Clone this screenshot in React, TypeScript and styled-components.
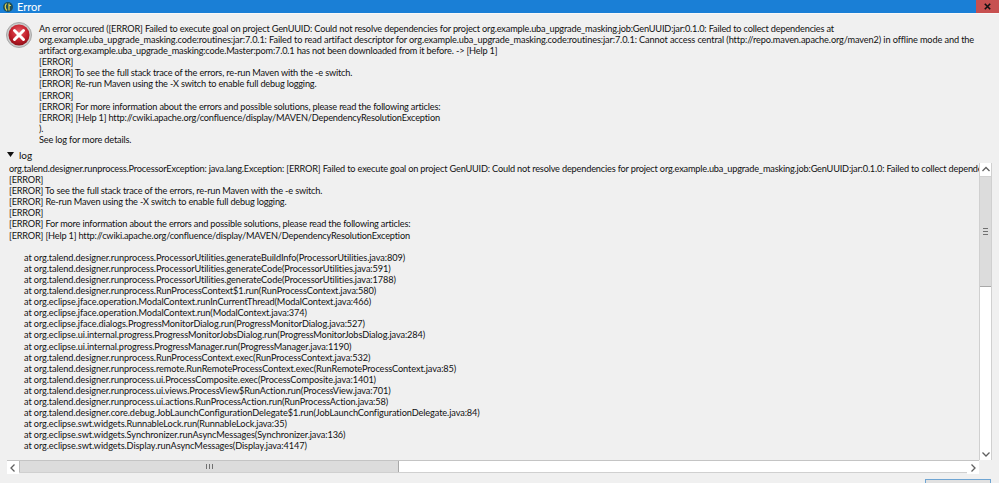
import React from 'react';
import styled, { createGlobalStyle } from 'styled-components';

const GlobalStyle = createGlobalStyle`
  html, body {
    margin: 0;
    padding: 0;
    background: #f0f0f0;
  }
`;

const Dialog = styled.div`
  width: 999px;
  height: 483px;
  overflow: hidden;
  display: flex;
  flex-direction: column;
  background: #f0f0f0;
  color: #111;
  font-family: 'Lato', 'Noto Sans', sans-serif;
  font-size: 9.2px;
  letter-spacing: -0.18px;
`;

const TitleBar = styled.div`
  flex: none;
  height: 13px;
  display: flex;
  align-items: center;
  background: #1a7fd6;
  color: #fff;
  border-bottom: 1px solid #f8f8f8;
  padding-left: 3px;
  gap: 4px;
  font-size: 11px;
  letter-spacing: 0;
`;

const TitleText = styled.span`
  flex: 1;
  line-height: 11px;
`;

const CloseButton = styled.div`
  width: 23px;
  height: 13px;
  background: #c75050;
  color: #111;
  display: flex;
  align-items: center;
  justify-content: center;
`;

const MessageRow = styled.div`
  flex: none;
  height: 131px;
  display: flex;
  padding: 9px 0 0 6px;
  box-sizing: border-box;
`;

const IconCell = styled.div`
  width: 33px;
  flex: none;
  margin-top: -1px;
`;

const TextBlock = styled.div`
  flex: 1;
  min-width: 0;
`;

const Line = styled.div<{ $tracking?: number }>`
  height: 11.1px;
  line-height: 11.1px;
  white-space: pre;
  ${p => (p.$tracking !== undefined ? `letter-spacing: ${p.$tracking}px;` : '')}
`;

const StackLine = styled(Line)`
  padding-left: 15px;
  letter-spacing: -0.1px;
`;

const LogToggle = styled.div`
  flex: none;
  height: 18px;
  box-sizing: border-box;
  padding: 3px 0 0 7px;
  display: flex;
  align-items: flex-start;
  gap: 5px;
  font-size: 10px;
  letter-spacing: 0;
  line-height: 14px;
`;

const ToggleArrow = styled.svg`
  margin-top: 4px;
`;

const LogArea = styled.div`
  flex: none;
  display: flex;
  height: 297px;
  padding-left: 9px;
  padding-right: 7px;
`;

const LogText = styled.div`
  flex: 1;
  min-width: 0;
  overflow: hidden;
`;

const VTrack = styled.div`
  flex: none;
  width: 13px;
  display: flex;
  flex-direction: column;
  background: #fff;
  box-sizing: border-box;
  border-left: 1px solid #d0d0d0;
  border-right: 1px solid #d0d0d0;
`;

const Arrow = styled.div<{ $size?: number }>`
  flex: none;
  width: ${p => (p.$size ? `${p.$size}px` : '100%')};
  height: 13px;
  background: #fff;
  display: flex;
  align-items: center;
  justify-content: center;
`;

const VThumb = styled.div`
  flex: none;
  height: 111px;
  background: #dcdcdc;
  border-top: 1px solid #d0d0d0;
  border-bottom: 1px solid #a8a8a8;
  box-sizing: border-box;
  display: flex;
  align-items: center;
  justify-content: center;
`;

const TrackFill = styled.div`
  flex: 1;
  background: #fff;
`;

const HBarRow = styled.div`
  flex: none;
  padding: 0 20px 0 7px;
`;

const HTrack = styled.div`
  height: 13px;
  display: flex;
  background: #fff;
  box-sizing: border-box;
  border-top: 1px solid #c4c4c4;
  border-bottom: 1px solid #d0d0d0;
`;

const HThumb = styled.div`
  flex: none;
  width: 380px;
  background: #dcdcdc;
  border-left: 1px solid #bcbcbc;
  border-right: 1px solid #a8a8a8;
  box-sizing: border-box;
  display: flex;
  align-items: center;
  justify-content: center;
`;

const ButtonRow = styled.div`
  flex: 1;
  display: flex;
  justify-content: flex-end;
  align-items: flex-start;
  padding: 6px 8px 0 0;
`;

const OkButton = styled.div`
  width: 66px;
  height: 20px;
  box-sizing: border-box;
  border: 1px solid #6fa5d3;
  background: #e1e1e1;
`;

const messageLines = [
  'An error occured ([ERROR] Failed to execute goal on project GenUUID: Could not resolve dependencies for project org.example.uba_upgrade_masking.job:GenUUID:jar:0.1.0: Failed to collect dependencies at',
  'org.example.uba_upgrade_masking.code:routines:jar:7.0.1: Failed to read artifact descriptor for org.example.uba_upgrade_masking.code:routines:jar:7.0.1: Cannot access central (http://repo.maven.apache.org/maven2) in offline mode and the',
  'artifact org.example.uba_upgrade_masking:code.Master:pom:7.0.1 has not been downloaded from it before. -> [Help 1]',
  '[ERROR]',
  '[ERROR] To see the full stack trace of the errors, re-run Maven with the -e switch.',
  '[ERROR] Re-run Maven using the -X switch to enable full debug logging.',
  '[ERROR]',
  '[ERROR] For more information about the errors and possible solutions, please read the following articles:',
  '[ERROR] [Help 1] http://cwiki.apache.org/confluence/display/MAVEN/DependencyResolutionException',
  ').',
  'See log for more details.',
];

const logLines = [
  'org.talend.designer.runprocess.ProcessorException: java.lang.Exception: [ERROR] Failed to execute goal on project GenUUID: Could not resolve dependencies for project org.example.uba_upgrade_masking.job:GenUUID:jar:0.1.0: Failed to collect dependencies at',
  '[ERROR]',
  '[ERROR] To see the full stack trace of the errors, re-run Maven with the -e switch.',
  '[ERROR] Re-run Maven using the -X switch to enable full debug logging.',
  '[ERROR]',
  '[ERROR] For more information about the errors and possible solutions, please read the following articles:',
  '[ERROR] [Help 1] http://cwiki.apache.org/confluence/display/MAVEN/DependencyResolutionException',
  '',
];

const stackLines = [
  'at org.talend.designer.runprocess.ProcessorUtilities.generateBuildInfo(ProcessorUtilities.java:809)',
  'at org.talend.designer.runprocess.ProcessorUtilities.generateCode(ProcessorUtilities.java:591)',
  'at org.talend.designer.runprocess.ProcessorUtilities.generateCode(ProcessorUtilities.java:1788)',
  'at org.talend.designer.runprocess.RunProcessContext$1.run(RunProcessContext.java:580)',
  'at org.eclipse.jface.operation.ModalContext.runInCurrentThread(ModalContext.java:466)',
  'at org.eclipse.jface.operation.ModalContext.run(ModalContext.java:374)',
  'at org.eclipse.jface.dialogs.ProgressMonitorDialog.run(ProgressMonitorDialog.java:527)',
  'at org.eclipse.ui.internal.progress.ProgressMonitorJobsDialog.run(ProgressMonitorJobsDialog.java:284)',
  'at org.eclipse.ui.internal.progress.ProgressManager.run(ProgressManager.java:1190)',
  'at org.talend.designer.runprocess.RunProcessContext.exec(RunProcessContext.java:532)',
  'at org.talend.designer.runprocess.remote.RunRemoteProcessContext.exec(RunRemoteProcessContext.java:85)',
  'at org.talend.designer.runprocess.ui.ProcessComposite.exec(ProcessComposite.java:1401)',
  'at org.talend.designer.runprocess.ui.views.ProcessView$RunAction.run(ProcessView.java:701)',
  'at org.talend.designer.runprocess.ui.actions.RunProcessAction.run(RunProcessAction.java:58)',
  'at org.talend.designer.core.debug.JobLaunchConfigurationDelegate$1.run(JobLaunchConfigurationDelegate.java:84)',
  'at org.eclipse.swt.widgets.RunnableLock.run(RunnableLock.java:35)',
  'at org.eclipse.swt.widgets.Synchronizer.runAsyncMessages(Synchronizer.java:136)',
  'at org.eclipse.swt.widgets.Display.runAsyncMessages(Display.java:4147)',
];

function ErrorIcon() {
  return (
    <svg width="26" height="26" viewBox="0 0 26 26">
      <defs>
        <radialGradient id="err" cx="50%" cy="35%" r="65%">
          <stop offset="0%" stopColor="#e8606a" />
          <stop offset="60%" stopColor="#c4202c" />
          <stop offset="100%" stopColor="#8f0f18" />
        </radialGradient>
      </defs>
      <circle cx="13" cy="13" r="12.5" fill="#c9c9c9" stroke="#a8a8a8" />
      <circle cx="13" cy="13" r="10.5" fill="url(#err)" />
      <path d="M8.5 8.5l9 9M17.5 8.5l-9 9" stroke="#fff" strokeWidth="3" strokeLinecap="round" />
    </svg>
  );
}

function TitleIcon() {
  return (
    <svg width="10" height="12" viewBox="0 0 10 12">
      <circle cx="5" cy="6" r="5" fill="#1d4f5c" />
      <path d="M3.5 2.5c-1.5 2-1.5 5 .5 7M6 2.5v7M6 4.5h2" stroke="#e6d24a" strokeWidth="1.2" fill="none" />
    </svg>
  );
}

type Dir = 'up' | 'down' | 'left' | 'right';
const chevrons: Record<Dir, string> = {
  up: 'M1.5 6 L5 2.5 L8.5 6',
  down: 'M1.5 3.5 L5 7 L8.5 3.5',
  left: 'M6.5 1.5 L3 5 L6.5 8.5',
  right: 'M3.5 1.5 L7 5 L3.5 8.5',
};

function Chevron({ dir }: { dir: Dir }) {
  return (
    <svg width="10" height="10" viewBox="0 0 10 10">
      <path d={chevrons[dir]} fill="none" stroke="#606060" strokeWidth="1.3" />
    </svg>
  );
}

function Grip({ vertical }: { vertical?: boolean }) {
  return (
    <svg width="7" height="7" viewBox="0 0 7 7">
      {vertical ? (
        <path d="M1 .5h5M1 3.5h5M1 6.5h5" stroke="#707070" />
      ) : (
        <path d="M.5 1v5M3.5 1v5M6.5 1v5" stroke="#707070" />
      )}
    </svg>
  );
}

export default function App() {
  return (
    <Dialog>
      <GlobalStyle />
      <TitleBar>
        <TitleIcon />
        <TitleText>Error</TitleText>
        <CloseButton>
          <svg width="7" height="7" viewBox="0 0 7 7">
            <path d="M.8.8l5.4 5.4M6.2.8L.8 6.2" stroke="#111" strokeWidth="1.6" />
          </svg>
        </CloseButton>
      </TitleBar>
      <MessageRow>
        <IconCell>
          <ErrorIcon />
        </IconCell>
        <TextBlock>
          {messageLines.map((line, i) => (
            <Line key={i} $tracking={i === 1 ? -0.12 : undefined}>
              {line}
            </Line>
          ))}
        </TextBlock>
      </MessageRow>
      <LogToggle>
        <ToggleArrow width="7" height="5" viewBox="0 0 7 5">
          <path d="M0 0h7L3.5 5z" fill="#111" />
        </ToggleArrow>
        <span>log</span>
      </LogToggle>
      <LogArea>
        <LogText>
          {logLines.map((line, i) => (
            <Line key={i}>{line}</Line>
          ))}
          {stackLines.map((line, i) => (
            <StackLine key={i}>{line}</StackLine>
          ))}
        </LogText>
        <VTrack>
          <Arrow>
            <Chevron dir="up" />
          </Arrow>
          <VThumb>
            <Grip vertical />
          </VThumb>
          <TrackFill />
          <Arrow>
            <Chevron dir="down" />
          </Arrow>
        </VTrack>
      </LogArea>
      <HBarRow>
        <HTrack>
          <Arrow $size={12}>
            <Chevron dir="left" />
          </Arrow>
          <HThumb>
            <Grip />
          </HThumb>
          <TrackFill />
          <Arrow $size={12}>
            <Chevron dir="right" />
          </Arrow>
        </HTrack>
      </HBarRow>
      <ButtonRow>
        <OkButton />
      </ButtonRow>
    </Dialog>
  );
}
